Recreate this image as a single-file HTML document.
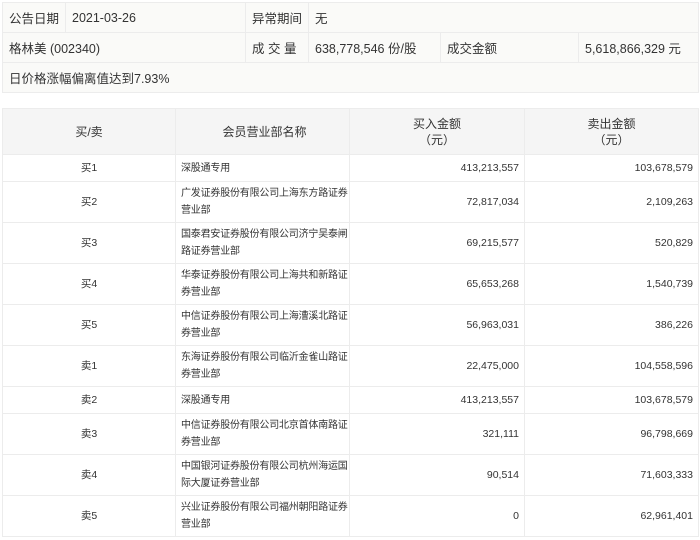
<!DOCTYPE html>
<html><head><meta charset="utf-8"><style>
*{margin:0;padding:0;box-sizing:border-box}
body{width:700px;height:540px;background:#fff;font-family:"Liberation Sans","Noto Sans CJK SC",sans-serif;color:#333;position:relative;overflow:hidden}
table{border-collapse:collapse;position:absolute;left:2px;table-layout:fixed}
td{border:1px solid #ececec}
#t1{top:2px;width:696px;background:#fafaf8;font-size:12.5px}
#t1 td{height:30px;padding:0 6px;white-space:nowrap;overflow:hidden}
#t2{top:108px;width:696px;font-size:10.5px}
#t2 td{padding:0 5px;line-height:17px}
#t2 td:nth-child(2){padding:0 1px 0 5px;letter-spacing:-0.2px;font-size:10px}
#t2 tr.h td{background:#f5f5f5;font-size:12px;text-align:center;height:46px;line-height:16px;letter-spacing:0}
#t2 td:nth-child(1){text-align:center}
#t2 td:nth-child(3),#t2 td:nth-child(4){text-align:right}
tr.s td{height:27px}tr.d td{height:41px}
</style></head><body>
<table id="t1">
<colgroup><col style="width:63px"><col style="width:180px"><col style="width:63px"><col style="width:132px"><col style="width:138px"><col style="width:120px"></colgroup>
<tr><td>公告日期</td><td>2021-03-26</td><td>异常期间</td><td colspan="3">无</td></tr>
<tr><td colspan="2">格林美 (002340)</td><td>成 交 量</td><td>638,778,546 份/股</td><td>成交金额</td><td>5,618,866,329 元</td></tr>
<tr><td colspan="6">日价格涨幅偏离值达到7.93%</td></tr>
</table>
<table id="t2">
<colgroup><col style="width:173px"><col style="width:174px"><col style="width:175px"><col style="width:174px"></colgroup>
<tr class="h"><td>买/卖</td><td style="font-size:12px;letter-spacing:0">会员营业部名称</td><td style="text-align:center">买入金额<br>（元）</td><td style="text-align:center">卖出金额<br>（元）</td></tr>
<tr class="s"><td>买1</td><td>深股通专用</td><td>413,213,557</td><td>103,678,579</td></tr>
<tr class="d"><td>买2</td><td>广发证券股份有限公司上海东方路证券营业部</td><td>72,817,034</td><td>2,109,263</td></tr>
<tr class="d"><td>买3</td><td>国泰君安证券股份有限公司济宁吴泰闸路证券营业部</td><td>69,215,577</td><td>520,829</td></tr>
<tr class="d"><td>买4</td><td>华泰证券股份有限公司上海共和新路证券营业部</td><td>65,653,268</td><td>1,540,739</td></tr>
<tr class="d"><td>买5</td><td>中信证券股份有限公司上海漕溪北路证券营业部</td><td>56,963,031</td><td>386,226</td></tr>
<tr class="d"><td>卖1</td><td>东海证券股份有限公司临沂金雀山路证券营业部</td><td>22,475,000</td><td>104,558,596</td></tr>
<tr class="s"><td>卖2</td><td>深股通专用</td><td>413,213,557</td><td>103,678,579</td></tr>
<tr class="d"><td>卖3</td><td>中信证券股份有限公司北京首体南路证券营业部</td><td>321,111</td><td>96,798,669</td></tr>
<tr class="d"><td>卖4</td><td>中国银河证券股份有限公司杭州海运国际大厦证券营业部</td><td>90,514</td><td>71,603,333</td></tr>
<tr class="d"><td>卖5</td><td>兴业证券股份有限公司福州朝阳路证券营业部</td><td>0</td><td>62,961,401</td></tr>
</table>
</body></html>
